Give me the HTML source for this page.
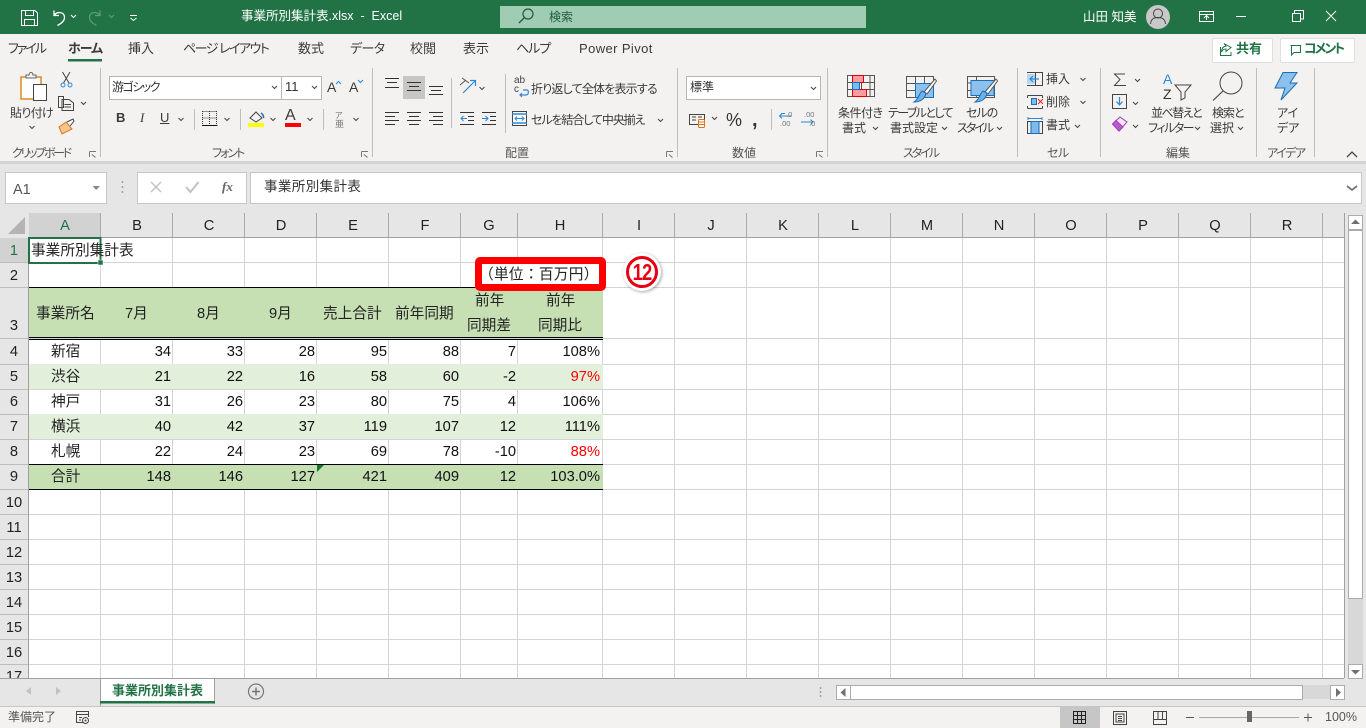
<!DOCTYPE html>
<html lang="ja"><head><meta charset="utf-8"><title>事業所別集計表.xlsx - Excel</title>
<style>
html,body{margin:0;padding:0;width:1366px;height:728px;overflow:hidden;background:#e6e6e6}
body{position:relative;font-family:"Liberation Sans","Noto Sans CJK JP",sans-serif;color:#000;font-feature-settings:"palt"}
.b{position:absolute}
.t{position:absolute;white-space:nowrap;line-height:16px;height:16px;font-size:12px;color:#3b3a39}
.tab{font-size:13px;top:41px;color:#3b3a39}
.g{font-size:12px;top:145px;color:#555}
.c{font-size:14.67px;color:#222;line-height:18px;height:18px;text-align:center;font-feature-settings:normal}
.n{font-size:14.67px;color:#111;line-height:18px;height:18px;text-align:right}
.h{font-size:14.67px;color:#222;line-height:18px;height:18px;width:72px;text-align:center}
.r{font-size:14.67px;color:#222;line-height:18px;height:18px;width:28px;left:0;text-align:center}
svg{position:absolute;left:0;top:0}
</style></head><body>
<div class="b" style="left:0;top:0;width:1366px;height:34px;background:#217346"></div>
<div class="b" style="left:500px;top:6px;width:366px;height:22px;background:#9fccb3"></div>
<div class="b" style="left:0;top:34px;width:1366px;height:127px;background:#f3f2f1"></div>
<div class="b" style="left:0;top:161px;width:1366px;height:3px;background:#d4d4d4"></div>
<div class="b" style="left:1212px;top:38px;width:59px;height:23px;background:#fff;border:1px solid #e1dfdd;border-radius:2px"></div>
<div class="b" style="left:1280px;top:38px;width:73px;height:23px;background:#fff;border:1px solid #e1dfdd;border-radius:2px"></div>
<div class="b" style="left:109px;top:76px;width:171px;height:22px;background:#fff;border:1px solid #b5b5b5"></div>
<div class="b" style="left:281px;top:76px;width:39px;height:22px;background:#fff;border:1px solid #b5b5b5"></div>
<div class="b" style="left:686px;top:76px;width:133px;height:22px;background:#fff;border:1px solid #b5b5b5"></div>
<div class="b" style="left:403px;top:76px;width:22px;height:23px;background:#c6c6c6"></div>
<div class="b" style="left:5px;top:172px;width:100px;height:30px;background:#fff;border:1px solid #c6c6c6"></div>
<div class="b" style="left:137px;top:172px;width:108px;height:30px;background:#fff;border:1px solid #c6c6c6"></div>
<div class="b" style="left:250px;top:172px;width:1110px;height:30px;background:#fff;border:1px solid #c6c6c6"></div>
<div class="b" style="left:29px;top:238px;width:1315px;height:440px;background:#fff"></div>
<div class="b" style="left:29px;top:213px;width:72px;height:24px;background:#d2d2d2"></div>
<div class="b" style="left:0;top:238px;width:28px;height:24px;background:#d2d2d2"></div>
<div class="b" style="left:0;top:707px;width:1366px;height:21px;background:#f3f2f1"></div>
<div class="b" style="left:1060px;top:707px;width:40px;height:21px;background:#c6c6c6"></div>
<div class="b" style="left:100px;top:678px;width:114px;height:25px;background:#fff"></div>

<svg width="1366" height="728" viewBox="0 0 1366 728" fill="none">
<path stroke="#d4d4d4" d="M100.5 238V678M172.5 238V678M244.5 238V678M316.5 238V678M388.5 238V678M460.5 238V678M517.5 238V678M602.5 238V678M674.5 238V678M746.5 238V678M818.5 238V678M890.5 238V678M962.5 238V678M1034.5 238V678M1106.5 238V678M1178.5 238V678M1250.5 238V678M1322.5 238V678"/>
<path stroke="#d4d4d4" d="M29 262.5H1344M29 287.5H1344M29 338.5H1344M29 364.5H1344M29 389.5H1344M29 414.5H1344M29 439.5H1344M29 464.5H1344M29 489.5H1344M29 514.5H1344M29 539.5H1344M29 564.5H1344M29 589.5H1344M29 614.5H1344M29 639.5H1344M29 664.5H1344"/>
<rect x="29" y="288" width="574" height="49" fill="#c6e0b4"/>
<rect x="29" y="364" width="574" height="25" fill="#e2efda"/>
<rect x="29" y="414" width="574" height="25" fill="#e2efda"/>
<rect x="29" y="465" width="574" height="24" fill="#c6e0b4"/>
<path stroke="#000" d="M29 287.5H603M29 337.5H603M29 339.5H603M29 464.5H603M29 489.5H603"/>
<path stroke="#a9a9a9" d="M100.5 213V237M172.5 213V237M244.5 213V237M316.5 213V237M388.5 213V237M460.5 213V237M517.5 213V237M602.5 213V237M674.5 213V237M746.5 213V237M818.5 213V237M890.5 213V237M962.5 213V237M1034.5 213V237M1106.5 213V237M1178.5 213V237M1250.5 213V237M1322.5 213V237"/>
<path stroke="#a0a0a0" d="M28 237.5H1344M28.5 238V678M1344.5 213V678M0 678.5H1344"/>
<path stroke="#bdbdbd" d="M0 262.5H28M0 287.5H28M0 338.5H28M0 364.5H28M0 389.5H28M0 414.5H28M0 439.5H28M0 464.5H28M0 489.5H28M0 514.5H28M0 539.5H28M0 564.5H28M0 589.5H28M0 614.5H28M0 639.5H28M0 664.5H28"/>
<path fill="#b4b4b4" d="M25 217V234H8Z"/>
<path fill="#0e7a2e" d="M317 465h7l-7 7Z"/>
<rect x="29" y="238" width="71.5" height="25" stroke="#217346" stroke-width="2"/>
<rect x="98" y="260" width="5" height="5" fill="#217346" stroke="#fff" stroke-width=".5"/>

<g stroke="#fff" stroke-width="1">
<path d="M21.5 10.500H35L37.500 13V25.500H21.500ZM25.500 10.500V15.500H33.500V10.500M24.500 25.500V19.500H34.500V25.500"/>
<path d="M54 10.500V15.500H59M54.500 15C57 11.500 64 11.500 64.500 17C64.800 21 61 23.500 57.500 25.500" stroke-width="1.300"/>
<path d="M71 15l2.500 2.500 2.500-2.500M130 15.500h7M130.500 18l3 2.500 3-2.500"/>
<path stroke="#5f9c7e" d="M100 10.500V15.500H95M99.500 15C97 11.500 90 11.500 89.500 17C89.200 21 93 23.500 96.500 25.500M109 15l2.500 2.500 2.500-2.500" stroke-width="1.200"/>
<path d="M1199.500 11.500H1213.500V21.500H1199.500ZM1199.500 14.500H1213.500M1206.500 20V16M1204 18l2.500-2.500 2.500 2.500"/>
<path d="M1236 16.500H1246M1292.500 13.500H1300.500V21.500H1292.500ZM1294.500 13V10.500H1303.500V19H1301M1326 11L1336 21M1336 11L1326 21"/>
</g>
<circle cx="1158" cy="17" r="12" fill="#c8c8c8"/>
<circle cx="1158" cy="13.500" r="4.500" stroke="#444"/><path d="M1150.500 24c.5-5 3-6.500 7.500-6.500s7 1.500 7.500 6.500" stroke="#444"/>
<circle cx="528" cy="14" r="5" stroke="#1e5c3c" stroke-width="1.200"/><path d="M524 18L519 23" stroke="#1e5c3c" stroke-width="1.300"/>
<rect x="68" y="59" width="34" height="2.500" fill="#217346"/>
<path d="M1224 43.500L1231 47.500L1226 51.500V49C1224 49 1222.500 50 1221.500 52C1221.500 48.500 1223 46.500 1226 46ZM1220.500 47V55.500H1231V52" stroke="#217346"/>
<path d="M1290.500 45.500H1300.500V52.500H1294L1291.500 55V45.500" stroke="#217346"/>
<path stroke="#bdbdbd" d="M100.500 68V157M372.500 68V157M677.500 68V157M827.500 68V157M1017.500 68V157M1100.500 68V157M1256.500 68V157M1314.500 68V157M194.500 109V130M240.500 109V130M323.500 109V130M451.500 78V128M505.500 74V133M771.500 109V130"/>
<path d="M21 77H41V99H21Z" fill="#fdfdfd" stroke="#e08a20" stroke-width="1.500"/>
<path d="M26 78V75H29C29.500 71.500 32.500 71.500 33 75H36V78Z" fill="#f3f2f1" stroke="#666"/>
<rect x="33.500" y="84.500" width="13" height="16" fill="#fff" stroke="#444"/>
<path d="M29.500 126l2.500 2.500 2.500-2.500" stroke="#444"/>
<path d="M62.500 72L69 83M70 72L63.500 83" stroke="#444"/><circle cx="63" cy="85" r="2" stroke="#2b88d8"/><circle cx="70" cy="85" r="2" stroke="#2b88d8"/>
<path d="M58.500 96.500H63.500V107.500H58.500ZM62 99.500H69L73.500 103V110.500H62ZM64.500 104.500H71M64.500 107H71" stroke="#444" fill="#f3f2f1"/>
<path d="M81 102l2.500 2.500 2.500-2.500" stroke="#444"/>
<path d="M59 127L66 122L72 129L62 134Z" fill="#f7c58c" stroke="#d9761a"/><path d="M67 122L73 119L74 121L70 126" fill="#fff" stroke="#444"/>
<g stroke="#444">
<path d="M272 86l2.500 2.500 2.500-2.500M312 86l2.500 2.500 2.500-2.500M178.500 118l2.500 2.500 2.500-2.500M224.500 118l2.500 2.500 2.500-2.500M270.500 118l2.500 2.500 2.500-2.500M307.500 118l2.500 2.500 2.500-2.500M353.500 118l2.500 2.500 2.500-2.500M479.500 87l2.500 2.500 2.500-2.500M658 119l2.500 2.500 2.500-2.500M811 87l2.500 2.500 2.500-2.500M712 117l2.500 2.500 2.500-2.500"/>
<path d="M1080.500 78l2.500 2.500 2.500-2.500M1080.500 101l2.500 2.500 2.500-2.500M1075 125l2.500 2.500 2.500-2.500M1135 79l2.500 2.500 2.500-2.500M1133 102l2.500 2.500 2.500-2.500M1133 125l2.500 2.500 2.500-2.500"/>
<path d="M873 127l2.500 2.500 2.500-2.500M942 127l2.500 2.500 2.500-2.500M997 127l2.500 2.500 2.500-2.500M1195 127l2.500 2.500 2.500-2.500M1238 127l2.500 2.500 2.500-2.500"/>
<path d="M1347 157l5-5 5 5" stroke-width="1.300"/>
</g>
<path d="M336 84l2.500-2.500 2.500 2.500M358 80l2.500 2.500 2.500-2.500" stroke="#2b88d8"/>
<path stroke="#333" stroke-dasharray="1 1" d="M202.500 111.500H217M202.500 118H217M209.500 111V125M202.500 111V125M216.500 111V125"/>
<path stroke="#111" d="M202 125.500H217.500"/>
<path d="M250 118L256 112L262 118L256 122Z" stroke="#444"/><path d="M261 113q3 2 2.500 5" stroke="#2b6cb0" stroke-width="1.500"/>
<rect x="248" y="123" width="16" height="4" fill="#ff0"/>
<rect x="285" y="123" width="16" height="4" fill="#f00"/>
<g stroke="#777"><path d="M89.500 151.500H96M89.500 151.500V157M92 154.500L95.500 157.500M361.500 151.500H368M361.500 151.500V157M364 154.500L367.500 157.500M666.500 151.500H673M666.500 151.500V157M669 154.500L672.500 157.500M816.500 151.500H823M816.500 151.500V157M819 154.500L822.500 157.500"/></g>
<g stroke="#333">
<path d="M385 78.500H399M387 82.500H397M385 87.500H399M407 82.500H421M409 86.500H419M407 90.500H421M429 86.500H443M431 90.500H441M429 94.500H443"/>
<path d="M385 112.500H399M385 116.500H395M385 120.500H399M385 124.500H395M407 112.500H421M409 116.500H419M407 120.500H421M409 124.500H419M429 112.500H443M433 116.500H443M429 120.500H443M433 124.500H443"/>
<path d="M460 112.500H474M468 116.500H474M468 120.500H474M460 124.500H474M482 112.500H496M490 116.500H496M490 120.500H496M482 124.500H496"/>
</g>
<path d="M461 118.500H467M463.500 116L461 118.500L463.500 121M482 118.500H488M485.500 116L488 118.500L485.500 121" stroke="#2b88d8"/>
<path d="M463 93L475 81M470 80.500H475.500V86" stroke="#2b88d8" stroke-width="1.200"/>
<path d="M460 85L466 80M462 78L469 83" stroke="#555"/>
<path d="M523 90H527C529 90 529 95 526 95H520M522 93L520 95L522 97" stroke="#2b88d8" stroke-width="1.200"/>
<rect x="512.500" y="111.500" width="14" height="14" stroke="#444" fill="#fff"/><path d="M512 114H527M512 123H527" stroke="#2b88d8" stroke-width="1.500"/><path d="M515 118.500H524M517 116.500L515 118.500L517 120.500M522 116.500L524 118.500L522 120.500" stroke="#2b88d8"/>
<path d="M689.500 114.500H704.500V124.500H689.500Z" stroke="#444"/><path d="M692 117H696M692 120H696M698 117H702" stroke="#444"/>
<rect x="698.500" y="119.500" width="6" height="8" rx="1" fill="#fff" stroke="#d9761a"/><path d="M699 122H704M699 124.500H704" stroke="#d9761a"/>
<path d="M781 113.500H785M779.500 116H791M782 113.500L779.500 116L782 118.500" stroke="#2b88d8"/>
<path d="M801 122H813M810.500 119.500L813 122L810.500 124.500" stroke="#2b88d8"/>
<path d="M847.500 75.500H874.500V96.500H847.500ZM847.500 82.500H874.500M847.500 89.500H874.500M852.500 75.500V96.500M861.500 75.500V96.500M870 75.500V96.500" stroke="#555"/>
<rect x="852.500" y="75.500" width="11" height="7" fill="#ff9ba3" stroke="#d00"/>
<rect x="852.500" y="89.500" width="14" height="7" fill="#ff9ba3" stroke="#d00"/>
<rect x="852.500" y="82.500" width="7" height="7" fill="#7fbaec" stroke="#1a6fb5"/>
<path d="M906.500 76.500H933.500V97.500H906.500ZM906.500 83.500H933.500M906.500 90.500H933.500M915.500 76.500V97.500M924.500 76.500V97.500" stroke="#555"/>
<rect x="915.500" y="83.500" width="18" height="14" fill="#8cc1ee" stroke="#1a6fb5"/>
<path d="M924 92L935 79L936.500 81L927 94Z" fill="#fff" stroke="#555"/>
<path d="M914 102C919 102 925 100 926 93L922 91C919 93 919 99 914 102Z" fill="#6fb0e8" stroke="#1a6fb5"/>
<path d="M967.500 76.500H994.500V97.500H967.500ZM967.500 83H994.500M967.500 90.500H978M976.500 76.500V97.500" stroke="#555"/>
<rect x="971" y="80.500" width="23" height="15" fill="#8cc1ee" stroke="#1a6fb5"/>
<path d="M985 92L996 79L997.500 81L988 94Z" fill="#fff" stroke="#555"/>
<path d="M975 102C980 102 986 100 987 93L983 91C980 93 980 99 975 102Z" fill="#6fb0e8" stroke="#1a6fb5"/>
<path d="M1027 72.500H1042.500V85.500H1027" stroke="#444"/><path d="M1035.500 72.500V85.500" stroke="#444"/><rect x="1027" y="74" width="8" height="10" fill="#b7d7f3"/><path d="M1030 79H1039M1033 76L1030 79L1033 82" stroke="#2b88d8" stroke-width="1.200"/>
<path d="M1027.500 95.500H1042.500M1027.500 108.500H1042.500M1027.500 95.500V98M1027.500 106V108.500M1042.500 95.500V98M1042.500 106V108.500" stroke="#444"/><rect x="1031.500" y="98.500" width="5" height="6" fill="#7fbaec" stroke="#1a6fb5"/><path d="M1038 99L1043 104M1043 99L1038 104" stroke="#e22"/>
<path d="M1027.500 121.500H1042.500V133.500H1027.500ZM1035 121.500V133.500" stroke="#444"/><rect x="1031" y="121.500" width="8" height="12" fill="#7fbaec" stroke="#1a6fb5"/><path d="M1028 118.500H1042M1028 117V120M1042 117V120" stroke="#2b88d8"/>
<path d="M1125 74H1114.500L1120 79.500L1114.500 85.500H1126" stroke="#444"/>
<rect x="1112.500" y="94.500" width="14" height="14" stroke="#444"/><path d="M1119.500 97V104M1116.500 101.500L1119.500 105L1122.500 101.500" stroke="#2b88d8" stroke-width="1.200"/>
<path d="M1112.500 124L1120 117L1127 122L1119 131Z" fill="#f6e6fa" stroke="#a33dba"/><path d="M1112.500 124L1116 120.500L1123 127L1119 131Z" fill="#b95bd0" stroke="#a33dba"/>
<path d="M1175 85H1191L1185 92V98L1181 100V92Z" stroke="#444"/>
<circle cx="1231" cy="83" r="11" stroke="#444"/><path d="M1223 91L1213 100.500" stroke="#444" stroke-width="1.200"/>
<path d="M1283 72.500H1297L1290 83H1297L1281 100L1285 88H1275Z" fill="#8cc1ee" stroke="#1a6fb5"/>
<path fill="#8a8a8a" d="M92.500 186H100L96.200 190Z"/>
<path d="M122.500 181v2M122.500 186v2M122.500 191v2M820.500 687v2M820.500 691v2M820.500 695v2" stroke="#a0a0a0" stroke-width="1.500"/>
<path d="M151 182L161 192M161 182L151 192" stroke="#c2c2c2" stroke-width="1.500"/>
<path d="M186 187L190.500 192L198.500 182" stroke="#c2c2c2" stroke-width="2"/>
<path d="M1347 186L1352 190L1357 186" stroke="#777" stroke-width="1.800"/>
<path d="M100.500 706V678.500M214.500 678.500V704" stroke="#a0a0a0"/>
<rect x="100" y="701" width="115" height="2.500" fill="#217346"/>
<path d="M0 706.500H1366" stroke="#c6c6c6"/>
<path fill="#c2c2c2" d="M31 687V695L26 691ZM56 687V695L61 691Z"/>
<circle cx="256" cy="691.500" r="7.500" stroke="#777" stroke-width="1.200"/><path d="M252 691.500H260M256 687.500V695.500" stroke="#777" stroke-width="1.500"/>
<path d="M76.500 711.500H88.500V714.500H76.500ZM76.500 714.500V722.500H83M88.500 714.500V717M79 717.500H82M79 720H81" stroke="#444"/><circle cx="85.500" cy="720.500" r="3" stroke="#444"/><circle cx="85.500" cy="720.500" r="1" fill="#444"/>
<rect x="836" y="685" width="509" height="14" fill="#d8d8d8"/>
<rect x="836.500" y="685.500" width="14" height="14" fill="#fff" stroke="#ababab"/>
<rect x="850.500" y="685.500" width="452" height="14" fill="#fff" stroke="#ababab"/>
<rect x="1330.500" y="685.500" width="14" height="14" fill="#fff" stroke="#ababab"/>
<path fill="#707070" d="M845.500 688V697L840.500 692.500ZM1336 688V697L1341 692.500Z"/>
<rect x="1348" y="230" width="15" height="448" fill="#d8d8d8"/>
<rect x="1348.500" y="215.500" width="14" height="14" fill="#fff" stroke="#ababab"/>
<rect x="1348.500" y="230.500" width="14" height="368" fill="#fff" stroke="#ababab"/>
<rect x="1348.500" y="664.500" width="14" height="14" fill="#fff" stroke="#ababab"/>
<path fill="#707070" d="M1355.500 219.500L1360 224H1351ZM1355.500 674.500L1360 670H1351Z"/>
<path d="M1073.500 711.500H1085.500V723.500H1073.500ZM1073.500 715.500H1085.500M1073.500 719.500H1085.500M1077.500 711.500V723.500M1081.500 711.500V723.500" stroke="#222"/>
<path d="M1113.500 711.500H1126.500V724.500H1113.500ZM1116 714H1124V722H1116ZM1118 716.500H1122M1118 718.500H1122M1118 720.500H1122" stroke="#444"/>
<path d="M1153.500 711.500H1166.500V724.500H1153.500ZM1153.500 719.500H1166.500M1158 711.500V719.500M1162.500 711.500V719.500" stroke="#444"/>
<path d="M1186 717.500H1194M1304 717.500H1312M1308 713.500V721.500" stroke="#555"/>
<path d="M1199 717.500H1299" stroke="#a8a8a8"/>
<rect x="1247" y="711" width="5" height="11" fill="#666"/>
</svg>

<div class="b" style="left:475px;top:257px;width:117px;height:20px;border:7px solid #f00;border-radius:5px;background:#fff"></div>
<div class="t c" style="left:479px;top:266px;font-size:14.67px;color:#222;letter-spacing:.3px">（単位：百万円）</div>
<div class="b" style="left:623px;top:253px;width:38px;height:38px;border-radius:50%;background:#fff;box-shadow:1px 1px 3px rgba(0,0,0,.35)"></div>
<div class="b" style="left:626px;top:256px;width:26px;height:26px;border-radius:50%;border:3px solid #e60012;background:#fff"></div>
<div class="t" style="left:626px;top:260px;width:32px;height:24px;line-height:24px;text-align:center;font-size:23px;font-weight:700;color:#e60012;letter-spacing:-1px;transform:scaleX(.8)">12</div>

<div class="t" style="left:241px;top:8px;font-size:12.500px;color:#fff">事業所別集計表.xlsx&nbsp; -&nbsp; Excel</div>
<div class="t" style="left:549px;top:9px;font-size:12px;color:#1e5c3c">検索</div>
<div class="t" style="left:1083px;top:9px;font-size:12.500px;color:#fff">山田 知美</div>
<div class="t tab" style="left:8px;letter-spacing:-2px">ファイル</div>
<div class="t tab" style="left:68px;font-weight:700;letter-spacing:-1px">ホーム</div>
<div class="t tab" style="left:128px">挿入</div>
<div class="t tab" style="left:183px;letter-spacing:-1.500px">ページ レイアウト</div>
<div class="t tab" style="left:298px">数式</div>
<div class="t tab" style="left:350px;letter-spacing:-.6px">データ</div>
<div class="t tab" style="left:410px">校閲</div>
<div class="t tab" style="left:463px">表示</div>
<div class="t tab" style="left:516px;letter-spacing:-1px">ヘルプ</div>
<div class="t tab" style="left:579px;letter-spacing:.4px">Power Pivot</div>
<div class="t" style="left:1236px;top:41px;font-size:13px;font-weight:700;color:#217346">共有</div>
<div class="t" style="left:1304px;top:41px;font-size:13px;font-weight:700;color:#217346;letter-spacing:-2px">コメント</div>
<div class="t" style="left:10px;top:105px;letter-spacing:-.7px">貼り付け</div>
<div class="t g" style="left:12px;letter-spacing:-2.300px">クリップボード</div>
<div class="t g" style="left:212px;letter-spacing:-2px">フォント</div>
<div class="t g" style="left:505px">配置</div>
<div class="t g" style="left:732px">数値</div>
<div class="t g" style="left:903px;letter-spacing:-2px">スタイル</div>
<div class="t g" style="left:1047px;letter-spacing:-.5px">セル</div>
<div class="t g" style="left:1166px">編集</div>
<div class="t g" style="left:1267px;letter-spacing:-1.500px">アイデア</div>
<div class="t" style="left:112px;top:79px;color:#333;letter-spacing:-1.500px">游ゴシック</div>
<div class="t" style="left:285px;top:79px;font-size:13px;color:#333">11</div>
<div class="t" style="left:327px;top:79px;font-size:14px">A</div>
<div class="t" style="left:349px;top:79px;font-size:14px">A</div>
<div class="t" style="left:116px;top:110px;font-size:13px;font-weight:700">B</div>
<div class="t" style="left:140px;top:110px;font-size:13px;font-style:italic;font-family:'Liberation Serif',serif">I</div>
<div class="t" style="left:160px;top:110px;font-size:13px;text-decoration:underline">U</div>
<div class="t" style="left:285px;top:108px;font-size:16px">A</div>
<div class="t" style="left:335px;top:108px;font-size:8px;color:#777">ア</div>
<div class="t" style="left:335px;top:116px;font-size:9px;color:#777">亜</div>
<div class="t" style="left:514px;top:76px;font-size:10px;line-height:10px;color:#444">ab</div>
<div class="t" style="left:514px;top:85px;font-size:10px;line-height:10px;color:#444">c</div>
<div class="t" style="left:531px;top:81px;letter-spacing:-.8px">折り返して全体を表示する</div>
<div class="t" style="left:531px;top:112px;letter-spacing:-1.100px">セルを結合して中央揃え</div>
<div class="t" style="left:690px;top:79px;color:#333">標準</div>
<div class="t" style="left:726px;top:110px;font-size:18px;line-height:20px;height:20px;color:#333">%</div>
<div class="t" style="left:752px;top:110px;font-size:20px;font-weight:700;line-height:20px;height:20px;color:#333">,</div>
<div class="t" style="left:786px;top:110px;font-size:7.500px;line-height:9px;color:#777">.0</div>
<div class="t" style="left:780px;top:119px;font-size:7.500px;line-height:9px;color:#777">.00</div>
<div class="t" style="left:804px;top:110px;font-size:7.500px;line-height:9px;color:#777">.00</div>
<div class="t" style="left:809px;top:119px;font-size:7.500px;line-height:9px;color:#777">.0</div>
<div class="t" style="left:838px;top:105px;letter-spacing:-.5px">条件付き</div>
<div class="t" style="left:842px;top:120px">書式</div>
<div class="t" style="left:888px;top:105px;letter-spacing:-1.600px">テーブルとして</div>
<div class="t" style="left:890px;top:120px">書式設定</div>
<div class="t" style="left:966px;top:105px;letter-spacing:-1px">セルの</div>
<div class="t" style="left:957px;top:120px;letter-spacing:-2px">スタイル</div>
<div class="t" style="left:1046px;top:71px">挿入</div>
<div class="t" style="left:1046px;top:94px">削除</div>
<div class="t" style="left:1046px;top:117px">書式</div>
<div class="t" style="left:1151px;top:105px;letter-spacing:-1.500px">並べ替えと</div>
<div class="t" style="left:1148px;top:120px;letter-spacing:-1.500px">フィルター</div>
<div class="t" style="left:1163px;top:71px;font-size:14px;color:#2b88d8">A</div>
<div class="t" style="left:1163px;top:86px;font-size:14px;color:#333">Z</div>
<div class="t" style="left:1212px;top:105px;letter-spacing:-1px">検索と</div>
<div class="t" style="left:1210px;top:120px">選択</div>
<div class="t" style="left:1277px;top:105px">アイ</div>
<div class="t" style="left:1277px;top:120px">デア</div>
<div class="t" style="left:13px;top:181px;font-size:14.500px;line-height:18px;height:18px;color:#555">A1</div>
<div class="t" style="left:222px;top:179px;font-size:13px;font-style:italic;font-weight:700;font-family:'Liberation Serif',serif;color:#666">fx</div>
<div class="t c" style="left:264px;top:178px;font-size:13.500px;color:#333;letter-spacing:.4px">事業所別集計表</div>
<div class="t h" style="left:29px;top:217px;color:#217346">A</div>
<div class="t h" style="left:101px;top:217px">B</div>
<div class="t h" style="left:173px;top:217px">C</div>
<div class="t h" style="left:245px;top:217px">D</div>
<div class="t h" style="left:317px;top:217px">E</div>
<div class="t h" style="left:389px;top:217px">F</div>
<div class="t h" style="left:453px;top:217px">G</div>
<div class="t h" style="left:524px;top:217px">H</div>
<div class="t h" style="left:603px;top:217px">I</div>
<div class="t h" style="left:675px;top:217px">J</div>
<div class="t h" style="left:747px;top:217px">K</div>
<div class="t h" style="left:819px;top:217px">L</div>
<div class="t h" style="left:891px;top:217px">M</div>
<div class="t h" style="left:963px;top:217px">N</div>
<div class="t h" style="left:1035px;top:217px">O</div>
<div class="t h" style="left:1107px;top:217px">P</div>
<div class="t h" style="left:1179px;top:217px">Q</div>
<div class="t h" style="left:1251px;top:217px">R</div>
<div class="t r" style="top:242px;color:#217346">1</div>
<div class="t r" style="top:267px">2</div>
<div class="t r" style="top:317px">3</div>
<div class="t r" style="top:343px">4</div>
<div class="t r" style="top:368px">5</div>
<div class="t r" style="top:393px">6</div>
<div class="t r" style="top:418px">7</div>
<div class="t r" style="top:443px">8</div>
<div class="t r" style="top:468px">9</div>
<div class="t r" style="top:494px">10</div>
<div class="t r" style="top:519px">11</div>
<div class="t r" style="top:544px">12</div>
<div class="t r" style="top:569px">13</div>
<div class="t r" style="top:594px">14</div>
<div class="t r" style="top:619px">15</div>
<div class="t r" style="top:644px">16</div>
<div class="b" style="left:0;top:667px;width:28px;height:11px;overflow:hidden"><div class="t r" style="top:1px">17</div></div>
<div class="t c" style="left:31px;top:242px">事業所別集計表</div>
<div class="t c" style="left:36px;top:305px">事業所名</div>
<div class="t c" style="left:125px;top:305px">7月</div>
<div class="t c" style="left:197px;top:305px">8月</div>
<div class="t c" style="left:269px;top:305px">9月</div>
<div class="t c" style="left:323px;top:305px">売上合計</div>
<div class="t c" style="left:395px;top:305px">前年同期</div>
<div class="t c" style="left:475px;top:292px">前年</div>
<div class="t c" style="left:546px;top:292px">前年</div>
<div class="t c" style="left:467px;top:317px">同期差</div>
<div class="t c" style="left:538px;top:317px">同期比</div>
<div class="t c" style="left:51px;top:343px">新宿</div>
<div class="t n" style="left:101px;width:70px;top:343px">34</div><div class="t n" style="left:173px;width:70px;top:343px">33</div><div class="t n" style="left:245px;width:70px;top:343px">28</div><div class="t n" style="left:317px;width:70px;top:343px">95</div><div class="t n" style="left:389px;width:70px;top:343px">88</div><div class="t n" style="left:461px;width:55px;top:343px">7</div><div class="t n" style="left:518px;width:82px;top:343px">108%</div>
<div class="t c" style="left:51px;top:368px">渋谷</div>
<div class="t n" style="left:101px;width:70px;top:368px">21</div><div class="t n" style="left:173px;width:70px;top:368px">22</div><div class="t n" style="left:245px;width:70px;top:368px">16</div><div class="t n" style="left:317px;width:70px;top:368px">58</div><div class="t n" style="left:389px;width:70px;top:368px">60</div><div class="t n" style="left:461px;width:55px;top:368px">-2</div><div class="t n" style="left:518px;width:82px;top:368px;color:#f00">97%</div>
<div class="t c" style="left:51px;top:393px">神戸</div>
<div class="t n" style="left:101px;width:70px;top:393px">31</div><div class="t n" style="left:173px;width:70px;top:393px">26</div><div class="t n" style="left:245px;width:70px;top:393px">23</div><div class="t n" style="left:317px;width:70px;top:393px">80</div><div class="t n" style="left:389px;width:70px;top:393px">75</div><div class="t n" style="left:461px;width:55px;top:393px">4</div><div class="t n" style="left:518px;width:82px;top:393px">106%</div>
<div class="t c" style="left:51px;top:418px">横浜</div>
<div class="t n" style="left:101px;width:70px;top:418px">40</div><div class="t n" style="left:173px;width:70px;top:418px">42</div><div class="t n" style="left:245px;width:70px;top:418px">37</div><div class="t n" style="left:317px;width:70px;top:418px">119</div><div class="t n" style="left:389px;width:70px;top:418px">107</div><div class="t n" style="left:461px;width:55px;top:418px">12</div><div class="t n" style="left:518px;width:82px;top:418px">111%</div>
<div class="t c" style="left:51px;top:443px">札幌</div>
<div class="t n" style="left:101px;width:70px;top:443px">22</div><div class="t n" style="left:173px;width:70px;top:443px">24</div><div class="t n" style="left:245px;width:70px;top:443px">23</div><div class="t n" style="left:317px;width:70px;top:443px">69</div><div class="t n" style="left:389px;width:70px;top:443px">78</div><div class="t n" style="left:461px;width:55px;top:443px">-10</div><div class="t n" style="left:518px;width:82px;top:443px;color:#f00">88%</div>
<div class="t c" style="left:51px;top:468px">合計</div>
<div class="t n" style="left:101px;width:70px;top:468px">148</div><div class="t n" style="left:173px;width:70px;top:468px">146</div><div class="t n" style="left:245px;width:70px;top:468px">127</div><div class="t n" style="left:317px;width:70px;top:468px">421</div><div class="t n" style="left:389px;width:70px;top:468px">409</div><div class="t n" style="left:461px;width:55px;top:468px">12</div><div class="t n" style="left:518px;width:82px;top:468px">103.0%</div>
<div class="t c" style="left:112px;top:682px;font-size:13px;color:#217346;font-weight:700">事業所別集計表</div>
<div class="t c" style="left:8px;top:708px;font-size:12px;color:#555">準備完了</div>
<div class="t" style="left:1325px;top:709px;font-size:12.500px;color:#555">100%</div>
</body></html>
